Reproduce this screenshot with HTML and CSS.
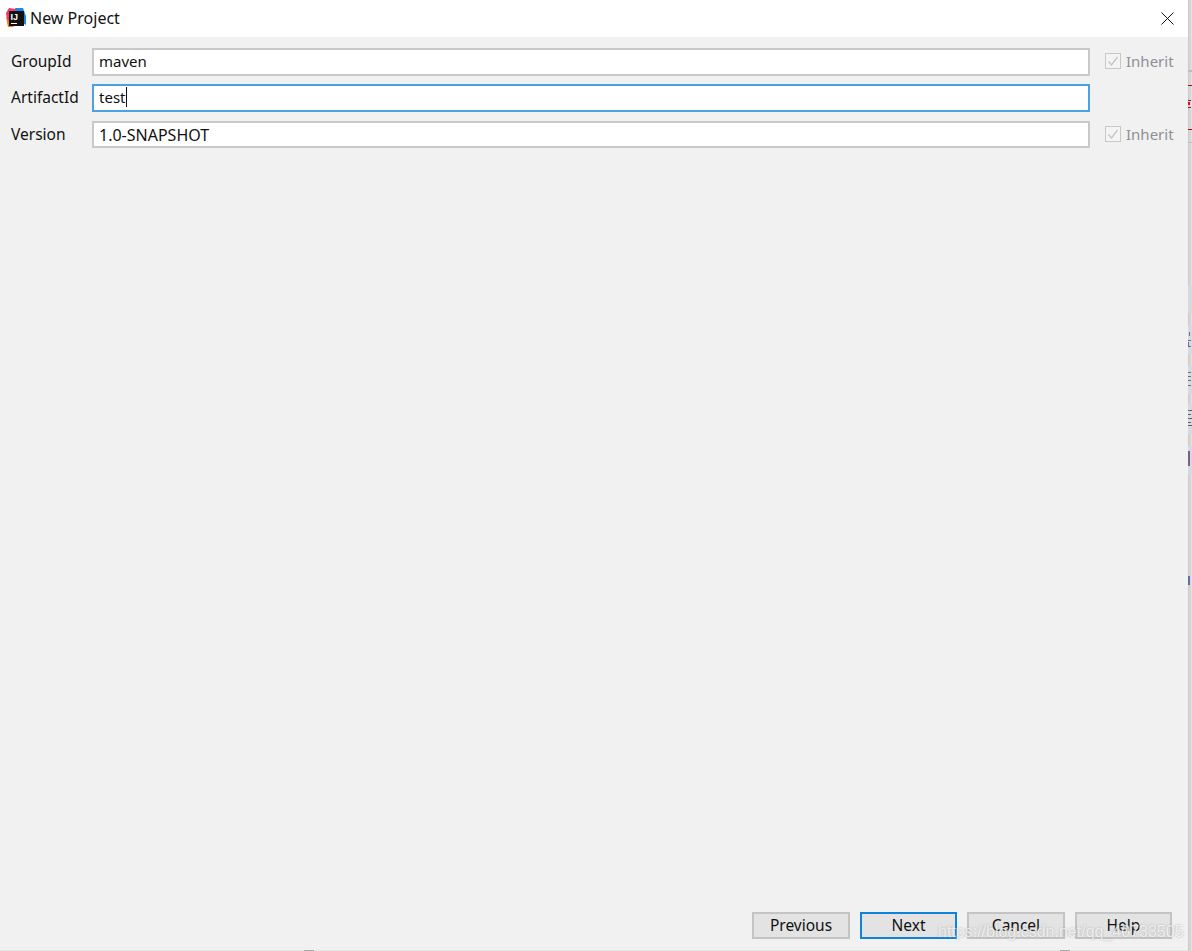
FILE: index.html
```html
<!DOCTYPE html>
<html lang="en">
<head>
    <meta charset="UTF-8">
    <meta name="viewport" content="width=device-width, initial-scale=1.0">
    <title>New Project</title>
    <link rel="stylesheet" href="styles.css">
</head>
<body>

    <div class="window-column">
        <div class="dialog">
            <!-- Title bar -->
            <div class="title-bar">
                <svg class="app-icon" width="20" height="20" viewBox="0 0 20 20">
                    <path d="M0 5 L3 0 L10 1 L10 10 L4 19 L1 12 Z" fill="#f0386b"/>
                    <path d="M9 0 L17 0 L20 8 L20 17 L12 12 Z" fill="#1e88e5"/>
                    <path d="M0 9 L2 19 L8 19 Z" fill="#f97a12"/>
                    <rect x="3" y="3" width="15" height="15" fill="#111"/>
                    <rect x="5" y="15" width="6" height="1" fill="#fff"/>
                    <text x="4.6" y="12" class="app-icon-text">IJ</text>
                </svg>
                <span class="title">New Project</span>
                <svg class="close-icon" width="13" height="13" viewBox="0 0 13 13">
                    <path d="M0.5 0.5 L12.5 12.5 M12.5 0.5 L0.5 12.5" stroke="#111" stroke-width="1" fill="none"/>
                </svg>
            </div>

            <div class="content">
                <div class="form">
                    <label class="field-label">GroupId</label>
                    <div class="field">maven</div>
                    <div class="inherit">
                        <span class="checkbox"><svg width="14" height="14" viewBox="0 0 14 14"><path d="M2.5 7.5 L5.5 11 L11.5 3" stroke="#c4c4c4" stroke-width="1.3" fill="none"/></svg></span>
                        <span>Inherit</span>
                    </div>

                    <label class="field-label">ArtifactId</label>
                    <div class="field field-focused"><span>test</span><span class="caret"></span></div>
                    <div></div>

                    <label class="field-label row-last">Version</label>
                    <div class="field row-last field-caps">1.0-SNAPSHOT</div>
                    <div class="inherit row-last">
                        <span class="checkbox"><svg width="14" height="14" viewBox="0 0 14 14"><path d="M2.5 7.5 L5.5 11 L11.5 3" stroke="#c4c4c4" stroke-width="1.3" fill="none"/></svg></span>
                        <span>Inherit</span>
                    </div>
                </div>

                <div class="buttons">
                    <button class="button">Previous</button>
                    <button class="button button-narrow button-default">Next</button>
                    <button class="button">Cancel</button>
                    <button class="button button-narrow">Help</button>
                </div>
            </div>
        </div>

        <!-- Bottom edge of the window behind -->
        <svg class="bottom-edge" width="1188" height="1" viewBox="0 0 1188 1">
            <rect x="0" y="0" width="1188" height="1" fill="#e6e6e6"/>
            <rect x="304" y="0" width="10" height="1" fill="#a8a8a8"/>
            <rect x="1060" y="0" width="10" height="1" fill="#a8a8a8"/>
        </svg>
    </div>

    <!-- Bit of the window behind the dialog -->
    <svg class="behind" width="4" height="951" viewBox="0 0 4 951">
        <rect x="0" y="0" width="4" height="951" fill="#d6d6d6"/>
        <rect x="0" y="0" width="1" height="951" fill="#cbcbcb"/>
        <rect x="3" y="0" width="1" height="951" fill="#e2e2e2"/>
        <rect x="0" y="70" width="4" height="2" fill="#bdbdbd"/>
        <rect x="0" y="85" width="4" height="1" fill="#b8001f"/>
        <rect x="0" y="100" width="3" height="1" fill="#b8001f"/>
        <rect x="0" y="102" width="2" height="3" fill="#c8102e"/>
        <rect x="0" y="107" width="3" height="1" fill="#b8001f"/>
        <rect x="0" y="129" width="4" height="1" fill="#b8001f"/>
        <rect x="0" y="142" width="4" height="1" fill="#bdbdbd"/>
        <rect x="0" y="285" width="4" height="28" fill="#d5dae0"/>
        <rect x="0" y="325" width="4" height="29" fill="#d5dae0"/>
        <rect x="1" y="332" width="1" height="4" fill="#6a6a8a"/>
        <rect x="0" y="340" width="3" height="1" fill="#6a6a8a"/>
        <rect x="0" y="342" width="1" height="5" fill="#6a6a9a"/>
        <rect x="0" y="346" width="3" height="1" fill="#6a6a9a"/>
        <rect x="0" y="365" width="4" height="29" fill="#d5dae0"/>
        <rect x="0" y="372" width="3" height="1" fill="#6a6a8a"/>
        <rect x="0" y="376" width="3" height="1" fill="#6a6a8a"/>
        <rect x="0" y="380" width="3" height="1" fill="#6a6a8a"/>
        <rect x="0" y="385" width="3" height="1" fill="#7a6a9a"/>
        <rect x="0" y="404" width="4" height="30" fill="#d5dae0"/>
        <rect x="0" y="410" width="4" height="1" fill="#5f5f7a"/>
        <rect x="0" y="414" width="3" height="1" fill="#5f5f7a"/>
        <rect x="0" y="418" width="4" height="1" fill="#5f5f7a"/>
        <rect x="0" y="422" width="3" height="1" fill="#5f5f7a"/>
        <rect x="0" y="425" width="4" height="1" fill="#5f5f7a"/>
        <rect x="0" y="446" width="4" height="29" fill="#d5dae0"/>
        <rect x="0" y="451" width="2" height="15" fill="#7a5f8a"/>
        <rect x="0" y="576" width="2" height="9" fill="#5f6fa8"/>
    </svg>

    <div class="watermark">https://blog.csdn.net/qq_40733505</div>

</body>
</html>
```

FILE: styles.css
```css
body {
    margin: 0;
    width: 1192px;
    height: 951px;
    display: flex;
    overflow: hidden;
    position: relative;
    font-family: 'Noto Sans', 'Open Sans', sans-serif;
    font-size: 15px;
    color: #111;
    background-color: #f1f1f1;
}

.window-column {
    width: 1188px;
    display: flex;
    flex-direction: column;
}

.dialog {
    height: 950px;
    display: flex;
    flex-direction: column;
    background-color: #f1f1f1;
}

/* Title bar */
.title-bar {
    height: 37px;
    flex: none;
    display: flex;
    align-items: center;
    padding: 0 14px 1px 6px;
    box-sizing: border-box;
    background-color: #fff;
}

.app-icon {
    flex: none;
}

.app-icon-text {
    font-family: 'Liberation Sans', sans-serif;
    font-size: 9px;
    font-weight: bold;
    fill: #fff;
}

.title {
    margin-left: 4px;
    flex: 1;
    font-size: 16px;
}

.close-icon {
    flex: none;
}

/* Form rows */
.content {
    flex: 1;
    display: flex;
    flex-direction: column;
    justify-content: space-between;
    padding: 11px 16px 11px 11px;
}

.form {
    display: grid;
    grid-template-columns: 81px 998px 1fr;
    grid-auto-rows: 28px;
    row-gap: 8px;
    align-items: center;
}

.field-label {
    white-space: nowrap;
    font-size: 15.5px;
    padding-bottom: 2px;
}

.field {
    height: 28px;
    box-sizing: border-box;
    display: flex;
    align-items: center;
    padding: 0 5px 2px;
    background-color: #fff;
    border: 2px solid #c9c9c9;
}

.field-focused {
    border-color: #4aa3e0;
}

.field-caps {
    font-size: 16px;
}

.field.row-last {
    align-self: end;
    height: 27px;
}

.caret {
    width: 1px;
    height: 20px;
    margin-left: 1px;
    background-color: #111;
}

.inherit {
    display: flex;
    align-items: center;
    gap: 5px;
    margin-left: 15px;
    padding-bottom: 2px;
    color: #8f8f97;
}

.row-last {
    padding-bottom: 0;
}

.checkbox {
    width: 16px;
    height: 16px;
    box-sizing: border-box;
    display: flex;
    align-items: center;
    justify-content: center;
    border: 1px solid #c8c8c8;
    background-color: #f4f4f4;
}

/* Buttons */
.buttons {
    display: flex;
    justify-content: flex-end;
    gap: 10px;
}

.button {
    width: 98px;
    height: 27px;
    padding: 0 0 1px;
    font-family: inherit;
    font-size: 15.5px;
    color: #111;
    background-color: #e3e3e3;
    border: 2px solid #c4c4c4;
}

.button-narrow {
    width: 97px;
}

.button-default {
    border-color: #0e83dc;
}

.behind,
.bottom-edge {
    flex: none;
    display: block;
}

/* Blog watermark laid over the buttons */
.watermark {
    position: absolute;
    left: 938px;
    top: 923px;
    font-family: 'Liberation Sans', sans-serif;
    font-size: 16px;
    color: rgba(255, 255, 255, 0.75);
    text-shadow: 0 0 2px rgba(150, 150, 150, 0.8);
    white-space: nowrap;
}
```
